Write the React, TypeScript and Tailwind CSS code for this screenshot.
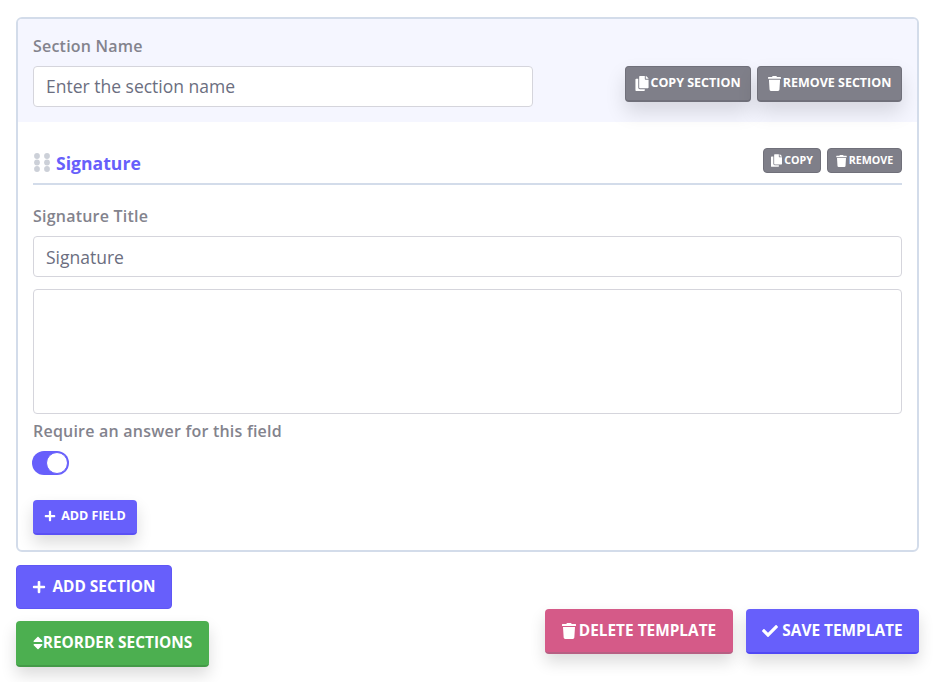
import { FaCheck, FaCopy, FaPlus, FaSort, FaTrash } from 'react-icons/fa';

function GripDots() {
  return (
    <svg width="16" height="19" viewBox="0 0 16 19" className="fill-[#ccd0d8] shrink-0">
      {[3, 13].map((cx) =>
        [3, 9.5, 16].map((cy) => <circle key={`${cx}-${cy}`} cx={cx} cy={cy} r="2.9" />)
      )}
    </svg>
  );
}

export default function App() {
  return (
    <div className="w-[948px] h-[682px] overflow-hidden bg-white pl-4 pr-[29px] pt-[17px] font-['Open_Sans',sans-serif]">
      {/* Section card */}
      <div className="h-[535px] border-2 border-[#d3dcea] rounded-md overflow-hidden">
        <div className="h-[103px] bg-[#f5f6ff] px-[15px] pt-[17px] flex justify-between">
          <div className="w-[500px]">
            <label className="block text-base leading-[20px] font-semibold tracking-[0.22px] text-[#83838d]">Section Name</label>
            <input
              placeholder="Enter the section name"
              className="mt-[10px] w-full h-[41px] pl-3 pr-3 pb-[1px] bg-white border border-[#d5d5dc] rounded text-[17.5px] text-[#6b6e80] placeholder:text-[#6b6e80] outline-none"
            />
          </div>
          <div className="flex gap-[6px] mt-[30px] h-[36px]">
            <button className="flex items-center justify-center gap-[1px] w-[126px] h-[36px] bg-[#7f7f89] border border-b-2 border-[#70707a] rounded text-white text-[12.5px] font-bold shadow-[0_10px_20px_rgba(0,0,0,0.13)]">
              <FaCopy className="w-[14px] h-[15px]" />
              COPY SECTION
            </button>
            <button className="flex items-center justify-center gap-[2px] w-[145px] h-[36px] bg-[#7f7f89] border border-b-2 border-[#70707a] rounded text-white text-[12.5px] font-bold shadow-[0_10px_20px_rgba(0,0,0,0.13)]">
              <FaTrash className="w-[13px] h-[15px]" />
              REMOVE SECTION
            </button>
          </div>
        </div>

        <div className="px-[15px]">
          {/* Field header */}
          <div className="flex items-center justify-between h-[63px] border-b-2 border-[#d3dcea] pt-[21px]">
            <div className="flex items-center gap-[6px] pl-[1px]">
              <GripDots />
              <span className="text-[17.6px] font-bold text-[#675ffb]">Signature</span>
            </div>
            <div className="flex gap-[6px] mb-[5px]">
              <button className="flex items-center justify-center gap-[2px] w-[58px] h-[25px] bg-[#7f7f89] border border-[#70707a] rounded text-white text-[10.7px] font-bold">
                <FaCopy className="w-[11px] h-[13px]" />
                COPY
              </button>
              <button className="flex items-center justify-center gap-[2px] w-[75px] h-[25px] bg-[#7f7f89] border border-[#70707a] rounded text-white text-[10.7px] font-bold">
                <FaTrash className="w-[11px] h-[12px]" />
                REMOVE
              </button>
            </div>
          </div>

          <label className="block mt-[21px] text-base leading-[20px] font-semibold tracking-[0.22px] text-[#83838d]">Signature Title</label>
          <input
            defaultValue="Signature"
            className="block mt-[10px] w-full h-[41px] pl-3 pr-3 bg-white border border-[#d5d5dc] rounded text-[17.5px] text-[#6b6e80] outline-none"
          />
          <textarea className="block mt-3 w-full h-[125px] border border-[#d5d5dc] rounded outline-none resize-none" />

          <label className="block mt-[7px] text-base leading-[20px] font-semibold tracking-[0.22px] text-[#83838d]">Require an answer for this field</label>

          {/* Toggle, on */}
          <div className="relative mt-[10px] -ml-[1px] w-[37px] h-[24px] rounded-full bg-[#675ffb]">
            <span className="absolute right-[1px] top-[1px] w-[22px] h-[22px] rounded-full bg-white border border-[#675ffb]" />
          </div>

          <button className="flex items-center justify-center gap-[5px] mt-[25px] w-[104px] h-[35px] pb-[1px] bg-[#675ffb] border-b-2 border-[#5a50f5] rounded text-white text-[12.5px] font-bold shadow-[0_8px_16px_rgba(0,0,0,0.14)]">
            <FaPlus className="w-[12px] h-[12px]" />
            ADD FIELD
          </button>
        </div>
      </div>

      {/* Footer actions */}
      <div className="flex justify-between mt-[13px]">
        <div className="flex flex-col items-start gap-3">
          <button className="flex items-center justify-center gap-[6px] w-[156px] h-[44px] pb-[1px] bg-[#675ffb] border border-[#5f57f5] rounded text-white text-[15.4px] font-bold">
            <FaPlus className="w-[14px] h-[14px]" />
            ADD SECTION
          </button>
          <button className="flex items-center justify-center w-[193px] h-[46px] pb-[1px] bg-[#4caf50] border-b-2 border-[#439a47] rounded text-white text-[15.4px] font-bold shadow-[0_8px_16px_rgba(0,0,0,0.14)]">
            <FaSort className="w-[10px] h-[16px]" />
            REORDER SECTIONS
          </button>
        </div>
        <div className="flex gap-[13px] mt-[44px] h-[45px]">
          <button className="flex items-center justify-center gap-[3px] w-[188px] h-[45px] bg-[#d55a88] border-b-2 border-[#b75f83] rounded text-white text-[15.4px] font-bold shadow-[0_8px_16px_rgba(0,0,0,0.14)]">
            <FaTrash className="w-[14px] h-[16px]" />
            DELETE TEMPLATE
          </button>
          <button className="flex items-center justify-center gap-[4px] w-[173px] h-[45px] bg-[#675ffb] border-b-2 border-[#5048f5] rounded text-white text-[15.4px] font-bold shadow-[0_8px_16px_rgba(0,0,0,0.14)]">
            <FaCheck className="w-[16px] h-[16px]" />
            SAVE TEMPLATE
          </button>
        </div>
      </div>
    </div>
  );
}
